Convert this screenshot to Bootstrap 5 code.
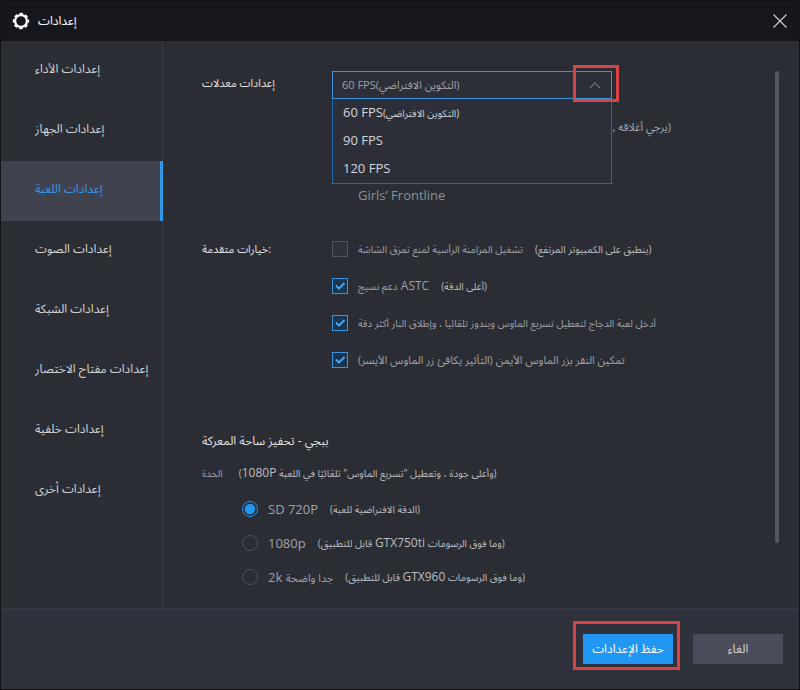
<!DOCTYPE html>
<html lang="ar" dir="ltr">
<head>
<meta charset="utf-8">
<meta name="viewport" content="width=device-width, initial-scale=1">
<title>إعدادات</title>
<link href="https://cdn.jsdelivr.net/npm/bootstrap@5.3.0/dist/css/bootstrap.min.css" rel="stylesheet">
<style>
:root { --blue: #2196f3; --line: #383b45; --dim: #8e9095; }
body { font: 13px/20px "Open Sans", "Noto Sans Arabic", "DejaVu Sans", sans-serif; background: #2a2d34; color: #d4d5d8; }
.app-window { border: 1px solid #111216; }
.title-bar { height: 40px; background: #15171c; color: #fff; padding: 0 11px; }
.ar { font-size: 12px; }
.ar-sm { font-size: 10px; }
.ar-md { font-size: 11px; }
.latin { font-size: 12px; }
.close-btn { background: none; border: 0; padding: 0; line-height: 0; }
.side-nav { width: 162px; border-right: 1px solid var(--line); }
.side-nav .nav-link { height: 60px; padding: 0 0 4px 34px; color: #d4d5d8; border-right: 3px solid transparent; margin-right: -1px; white-space: nowrap; font-size: 12px; }
.side-nav .nav-link.active { background: #40434d; color: #3399e6; border-color: #3399e6; }
.settings-pane { padding: 30px 20px 14px 39px; }
.form-line { display: grid; grid-template-columns: 130px 1fr; }
.field-label { line-height: 24px; color: #e2e3e6; font-size: 11px; }
.fps-box { width: 280px; height: 28px; }
.fps-box select { height: 28px; padding: 0 9px; border: 1px solid #3a93dc; border-radius: 0; background: #2d2f38; color: #a0a2a7; font-size: 11px; line-height: 24px; }
.fps-chevron { right: 11px; top: 9px; pointer-events: none; }
.fps-menu { top: 28px; left: 0; right: 0; border: 1px solid #1c69ab; border-top: 0; background: #2d2f38; z-index: 2; }
.fps-menu li { height: 28px; line-height: 26px; padding: 0 10px; }
.callout-box { border: 3px solid #d84345; z-index: 3; pointer-events: none; }
.callout-arrow { width: 46px; height: 37px; top: -6px; right: -7px; }
.callout-save { inset: -13px -7px -6px -10px; }
.close-hint { width: 339px; height: 28px; margin-top: 14px; color: #a8aaae; }
.game-name { height: 28px; margin-top: 40px; padding: 4px 0 0 26px; color: var(--dim); }
.advanced { margin-top: 21px; }
.advanced .field-label { line-height: 37px; }
.opt-row { display: flex; align-items: center; gap: 10px; height: 37px; white-space: nowrap; color: #a0a2a7; }
.opt-row label { display: flex; align-items: center; gap: 12px; }
.note { color: #bcbdc1; }
.opt-row .form-check-input { width: 16px; height: 16px; margin: 0; flex: none; background-color: #30323b; border: 1px solid #50535c; border-radius: 0; box-shadow: none; }
.opt-row .form-check-input:checked { background-color: #1b3450; border-color: #3a93dc; background-size: 14px;
 background-image: url("data:image/svg+xml,%3csvg xmlns='http://www.w3.org/2000/svg' viewBox='0 0 14 14'%3e%3cpath fill='none' stroke='%2345a5f5' stroke-width='2' d='M3 6.5l3 3L11.500 4'/%3e%3c/svg%3e"); }
.opt-row .form-check-input[type=radio] { border-radius: 50%; background-color: transparent; }
.opt-row .form-check-input[type=radio]:checked { border-color: #2196f3;
 background-image: url("data:image/svg+xml,%3csvg xmlns='http://www.w3.org/2000/svg' viewBox='0 0 14 14'%3e%3ccircle cx='7' cy='7' r='5.300' fill='%232196f3'/%3e%3c/svg%3e"); }
.battle { margin-top: 48px; }
.battle h2 { font-size: 12px; line-height: 30px; margin: 0; color: #e2e3e6; font-weight: 400; }
.battle .opt-row { height: 34px; }
.battle .radios { margin: 2px 0 0 40px; }
.scroll-thumb { width: 4px; height: 472px; margin: 30px 20px 0 0; background: #55575e; border-radius: 2px; }
.foot-bar { height: 81px; background: #2f323b; border-top: 1px solid #373a45; padding: 0 16px; gap: 20px; }
.foot-bar .btn { width: 90px; height: 30px; border: 0; border-radius: 0; padding: 0; font-size: 12px; line-height: 28px; white-space: nowrap; }
.btn-save { background: var(--blue); color: #fff; }
.btn-cancel { background: #4a4d59; color: #d4d5d8; }
</style>
<script src="https://cdn.jsdelivr.net/npm/bootstrap@5.3.0/dist/js/bootstrap.bundle.min.js"></script>
</head>
<body>
<div class="app-window min-vh-100 d-flex flex-column">
  <header class="title-bar d-flex align-items-center justify-content-between">
    <div class="d-flex align-items-center gap-2">
      <svg width="18" height="18" viewBox="0 0 18 18" aria-hidden="true"><circle cx="9" cy="9" r="5.900" fill="none" stroke="#fff" stroke-width="2.200"/><circle cx="9" cy="9" r="7.300" fill="none" stroke="#fff" stroke-width="1.800" stroke-dasharray="3.400 2.333" stroke-dashoffset="1.700"/></svg>
      <span class="ar">إعدادات</span>
    </div>
    <button class="close-btn" type="button" aria-label="إغلاق"><svg width="16" height="16" viewBox="0 0 16 16"><path d="M1.500 1.500l13 13M14.500 1.500l-13 13" stroke="#c8c9cc" stroke-width="1.300"/></svg></button>
  </header>
  <div class="d-flex flex-grow-1">
    <nav class="side-nav nav flex-column flex-nowrap flex-shrink-0">
      <a class="nav-link d-flex align-items-center" href="#">إعدادات الأداء</a>
      <a class="nav-link d-flex align-items-center" href="#">إعدادات الجهاز</a>
      <a class="nav-link d-flex align-items-center active" href="#" aria-current="page">إعدادات اللعبة</a>
      <a class="nav-link d-flex align-items-center" href="#">إعدادات الصوت</a>
      <a class="nav-link d-flex align-items-center" href="#">إعدادات الشبكة</a>
      <a class="nav-link d-flex align-items-center" href="#">إعدادات مفتاح الاختصار</a>
      <a class="nav-link d-flex align-items-center" href="#">إعدادات خلفية</a>
      <a class="nav-link d-flex align-items-center" href="#">إعدادات أخرى</a>
    </nav>
    <main class="settings-pane flex-grow-1">
      <section class="form-line">
        <label class="field-label" for="fps">إعدادات معدلات</label>
        <div>
          <div class="fps-box position-relative">
            <select id="fps" class="form-select"><option>60 FPS(التكوين الافتراضي)</option><option>90 FPS</option><option>120 FPS</option></select>
            <svg class="fps-chevron position-absolute" width="12" height="10" viewBox="0 0 12 10" aria-hidden="true"><path d="M1 8l5-5 5 5" fill="none" stroke="#6b6d75" stroke-width="1.300"/></svg>
            <ul class="fps-menu position-absolute list-unstyled mb-0">
              <li>60 FPS<span class="ar-sm">(التكوين الافتراضي)</span></li>
              <li>90 FPS</li>
              <li>120 FPS</li>
            </ul>
            <div class="callout-box callout-arrow position-absolute"></div>
          </div>
          <div class="close-hint ar-md d-flex align-items-center justify-content-end"><span dir="rtl">(يرجي أغلاقه ,</span></div>
          <div class="game-name">Girls’ Frontline</div>
        </div>
      </section>
      <section class="form-line advanced">
        <div class="field-label">خيارات متقدمة:</div>
        <div>
          <div class="opt-row"><input class="form-check-input" type="checkbox" id="c1"><label for="c1"><span class="ar-sm">تشغيل المزامنة الرأسية لمنع تمزق الشاشة</span><span class="ar-sm note" dir="rtl">(ينطبق على الكمبيوتر المرتفع)</span></label></div>
          <div class="opt-row"><input class="form-check-input" type="checkbox" id="c2" checked><label for="c2"><span><span class="ar-sm">دعم نسيج</span> <span class="latin">ASTC</span></span><span class="ar-sm note" dir="rtl">(أعلى الدقة)</span></label></div>
          <div class="opt-row"><input class="form-check-input" type="checkbox" id="c3" checked><label for="c3"><span class="ar-sm">أدخل لعبة الدجاج لتعطيل تسريع الماوس ويندوز تلقائيا ، وإطلاق النار أكثر دقة</span></label></div>
          <div class="opt-row"><input class="form-check-input" type="checkbox" id="c4" checked><label for="c4"><span class="ar-md" dir="rtl">تمكين النقر بزر الماوس الأيمن (التأثير يكافئ زر الماوس الأيسر)</span></label></div>
        </div>
      </section>
      <section class="battle">
        <h2>ببجي - تحفيز ساحة المعركة</h2>
        <div class="opt-row gap-3"><span class="ar-sm">الحدة</span><span class="ar-sm note" dir="rtl">(وأعلى جودة ، وتعطيل "تسريع الماوس" تلقائيًا في اللعبة <span class="latin">1080P</span>)</span></div>
        <div class="radios">
          <div class="opt-row"><input class="form-check-input" type="radio" name="res" id="r1" checked><label for="r1"><span>SD 720P</span><span class="ar-sm note" dir="rtl">(الدقة الافتراضية للعبة)</span></label></div>
          <div class="opt-row"><input class="form-check-input" type="radio" name="res" id="r2"><label for="r2"><span>1080p</span><span class="ar-sm note" dir="rtl">(وما فوق الرسومات <span class="latin">GTX750ti</span> قابل للتطبيق)</span></label></div>
          <div class="opt-row"><input class="form-check-input" type="radio" name="res" id="r3"><label for="r3"><span>2k <span class="ar-md">جدا واضحة</span></span><span class="ar-sm note" dir="rtl">(وما فوق الرسومات <span class="latin">GTX960</span> قابل للتطبيق)</span></label></div>
        </div>
      </section>
    </main>
    <div class="scroll-thumb flex-shrink-0"></div>
  </div>
  <footer class="foot-bar d-flex align-items-center justify-content-end">
    <div class="position-relative"><button class="btn btn-save" type="button">حفظ الإعدادات</button><div class="callout-box callout-save position-absolute"></div></div>
    <button class="btn btn-cancel" type="button">الغاء</button>
  </footer>
</div>
</body>
</html>
